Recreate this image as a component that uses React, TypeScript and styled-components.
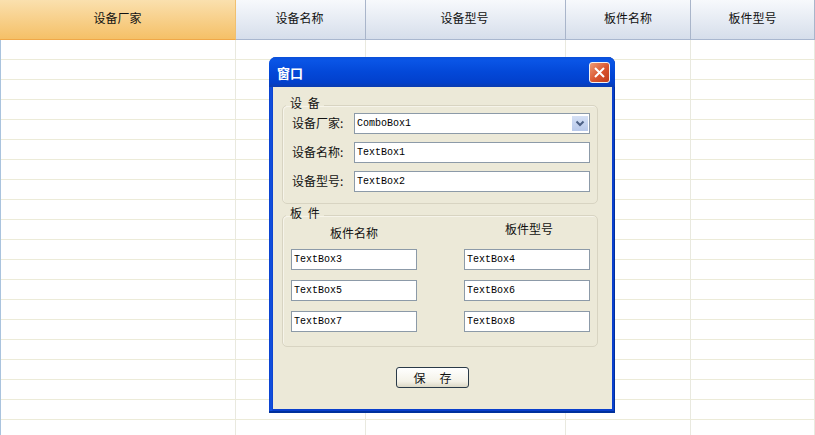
import React from 'react'
import styled, { createGlobalStyle } from 'styled-components'

const CJK = `"Noto Sans CJK SC", "Liberation Sans", sans-serif`
const MONO = `"Liberation Mono", "Noto Sans CJK SC", monospace`

const GlobalStyle = createGlobalStyle`
  html, body { margin: 0; padding: 0; background: #fff; }
`

const Page = styled.div`
  position: relative;
  width: 815px;
  height: 435px;
  overflow: hidden;
  font-family: ${CJK};
  font-size: 12px;
  color: #111;
`
const HeaderRow = styled.div`
  display: flex;
  height: 40px;
`
const HeaderCell = styled.div<{ $w: number; $active?: boolean }>`
  box-sizing: border-box;
  width: ${(p) => p.$w}px;
  display: flex;
  align-items: center;
  justify-content: center;
  padding-bottom: 4px;
  border-bottom: 1px solid ${(p) => (p.$active ? '#f0a848' : '#a9b7cf')};
  border-right: 1px solid ${(p) => (p.$active ? '#f0c070' : '#a9b5ca')};
  background: ${(p) =>
    p.$active
      ? 'linear-gradient(#fae0ae, #f5c067)'
      : 'linear-gradient(#f7f9fc, #d6deeb)'};
  &:nth-child(2),
  &:nth-child(3) {
    padding-right: 2px;
  }
`
const GridBody = styled.div`
  border-left: 1px solid #a9c3de;
`
const Row = styled.div`
  display: flex;
  height: 20px;
`
const Cell = styled.div<{ $w: number }>`
  box-sizing: border-box;
  width: ${(p) => p.$w}px;
  border-bottom: 1px solid #ecebd8;
  border-right: 1px solid #e9e9df;
`

const Dialog = styled.div`
  position: absolute;
  left: 269px;
  top: 57px;
  width: 346px;
  height: 356px;
  box-sizing: border-box;
  display: flex;
  flex-direction: column;
  padding: 0 3px 4px 4px;
  border-radius: 7px 7px 0 0;
  background: linear-gradient(90deg, #0a3fcc, #1252e0 2px, #0a3fcc 4px, #0a3fcc 100%);
  box-shadow: inset 0 -2px 0 #00309c, inset -1px 0 0 #00309c;
`
const TitleBar = styled.div`
  height: 30px;
  margin: 0 -3px 0 -4px;
  padding: 0 5px 0 8px;
  display: flex;
  align-items: center;
  justify-content: space-between;
  border-radius: 7px 7px 0 0;
  background: linear-gradient(#0a4fd8, #0a55e6 12%, #0348d8 50%, #0240cc 85%, #0b3cb0);
`
const Title = styled.span`
  color: #fff;
  font-size: 13px;
  font-weight: 700;
`
const CloseButton = styled.div`
  box-sizing: border-box;
  width: 21px;
  height: 21px;
  display: flex;
  align-items: center;
  justify-content: center;
  border: 1px solid #f2f2f2;
  border-radius: 3px;
  background: linear-gradient(135deg, #ee9c76, #d9542e 55%, #c03c1c);
`
const DialogBody = styled.div`
  flex: 1;
  background: #ece9d8;
  padding: 11px 14px 0 9px;
  display: flex;
  flex-direction: column;
  align-items: stretch;
`
const Group = styled.fieldset<{ $h: number }>`
  box-sizing: border-box;
  height: ${(p) => p.$h}px;
  margin: 0 0 4px;
  min-width: 0;
  padding: 0 7px 0 8px;
  border: 1px solid #d8d4c2;
  box-shadow: inset 1px 1px 0 #f6f4ea;
  border-radius: 5px;
`
const Legend = styled.legend`
  position: relative;
  top: -2px;
  padding: 0 4px;
  margin-left: -5px;
  line-height: 14px;
  white-space: pre;
  word-spacing: 3px;
`
const FormRows = styled.div`
  display: flex;
  flex-direction: column;
  gap: 8px;
  margin-top: 1px;
`
const FormRow = styled.div`
  display: flex;
  align-items: center;
  gap: 7px;
  padding-left: 1px;
`
const FieldLabel = styled.span`
  width: 55px;
  padding-bottom: 3px;
  white-space: nowrap;
`
const Field = styled.div<{ $w: number }>`
  box-sizing: border-box;
  position: relative;
  width: ${(p) => p.$w}px;
  height: 21px;
  padding-left: 2px;
  display: flex;
  align-items: center;
  background: #fff;
  border: 1px solid #8c9aa8;
  font-family: ${MONO};
  font-size: 10px;
  color: #000;
`
const ComboArrow = styled.div`
  position: absolute;
  right: 1px;
  top: 2px;
  width: 16px;
  height: 15px;
  display: flex;
  align-items: center;
  justify-content: center;
  background: linear-gradient(#d5e0f5, #b8c9ea);
`
const Columns = styled.div`
  display: grid;
  grid-template-columns: 126px 126px;
  justify-content: space-between;
`
const Column = styled.div`
  display: flex;
  flex-direction: column;
  gap: 10px;
`
const ColumnTitle = styled.div<{ $offset: number; $shift?: number }>`
  height: 17px;
  line-height: 17px;
  text-align: center;
  margin-top: ${(p) => p.$offset}px;
  margin-bottom: ${(p) => -p.$offset}px;
  padding-left: ${(p) => p.$shift ?? 0}px;
`
const Footer = styled.div`
  display: flex;
  justify-content: center;
  padding: 16px 15px 0 0;
`
const SaveButton = styled.button`
  box-sizing: border-box;
  width: 73px;
  height: 21px;
  padding: 0;
  border: 1px solid #2a3a48;
  border-radius: 3px;
  background: linear-gradient(#fff, #f4f2e8 70%, #dcd8c6);
  font-family: ${CJK};
  font-size: 12px;
  color: #111;
  white-space: pre;
  word-spacing: 2px;
`

const columns: [string, number][] = [
  ['设备厂家', 236],
  ['设备名称', 130],
  ['设备型号', 200],
  ['板件名称', 125],
  ['板件型号', 124],
]

export default function App() {
  return (
    <Page>
      <GlobalStyle />
      <HeaderRow>
        {columns.map(([name, w], i) => (
          <HeaderCell key={name} $w={w} $active={i === 0}>
            {name}
          </HeaderCell>
        ))}
      </HeaderRow>
      <GridBody>
        {Array.from({ length: 20 }, (_, r) => (
          <Row key={r}>
            {columns.map(([name, w], i) => (
              <Cell key={name} $w={i === 0 ? w - 1 : w} />
            ))}
          </Row>
        ))}
      </GridBody>

      <Dialog>
        <TitleBar>
          <Title>窗口</Title>
          <CloseButton>
            <svg width="13" height="13" viewBox="0 0 13 13">
              <path d="M2 2 L11 11 M11 2 L2 11" stroke="#fff" strokeWidth="2" fill="none" />
            </svg>
          </CloseButton>
        </TitleBar>
        <DialogBody>
          <Group $h={106}>
            <Legend>设 备</Legend>
            <FormRows>
              <FormRow>
                <FieldLabel>设备厂家:</FieldLabel>
                <Field $w={236}>
                  ComboBox1
                  <ComboArrow>
                    <svg width="10" height="8" viewBox="0 0 10 8">
                      <path d="M1.5 1.5 L5 5 L8.5 1.5" stroke="#4d6185" strokeWidth="2" fill="none" />
                    </svg>
                  </ComboArrow>
                </Field>
              </FormRow>
              <FormRow>
                <FieldLabel>设备名称:</FieldLabel>
                <Field $w={236}>TextBox1</Field>
              </FormRow>
              <FormRow>
                <FieldLabel>设备型号:</FieldLabel>
                <Field $w={236}>TextBox2</Field>
              </FormRow>
            </FormRows>
          </Group>
          <Group $h={139}>
            <Legend>板 件</Legend>
            <Columns>
              <Column>
                <ColumnTitle $offset={2}>板件名称</ColumnTitle>
                <Field $w={126}>TextBox3</Field>
                <Field $w={126}>TextBox5</Field>
                <Field $w={126}>TextBox7</Field>
              </Column>
              <Column>
                <ColumnTitle $offset={-2} $shift={4}>板件型号</ColumnTitle>
                <Field $w={126}>TextBox4</Field>
                <Field $w={126}>TextBox6</Field>
                <Field $w={126}>TextBox8</Field>
              </Column>
            </Columns>
          </Group>
          <Footer>
            <SaveButton>{'保   存'}</SaveButton>
          </Footer>
        </DialogBody>
      </Dialog>
    </Page>
  )
}
